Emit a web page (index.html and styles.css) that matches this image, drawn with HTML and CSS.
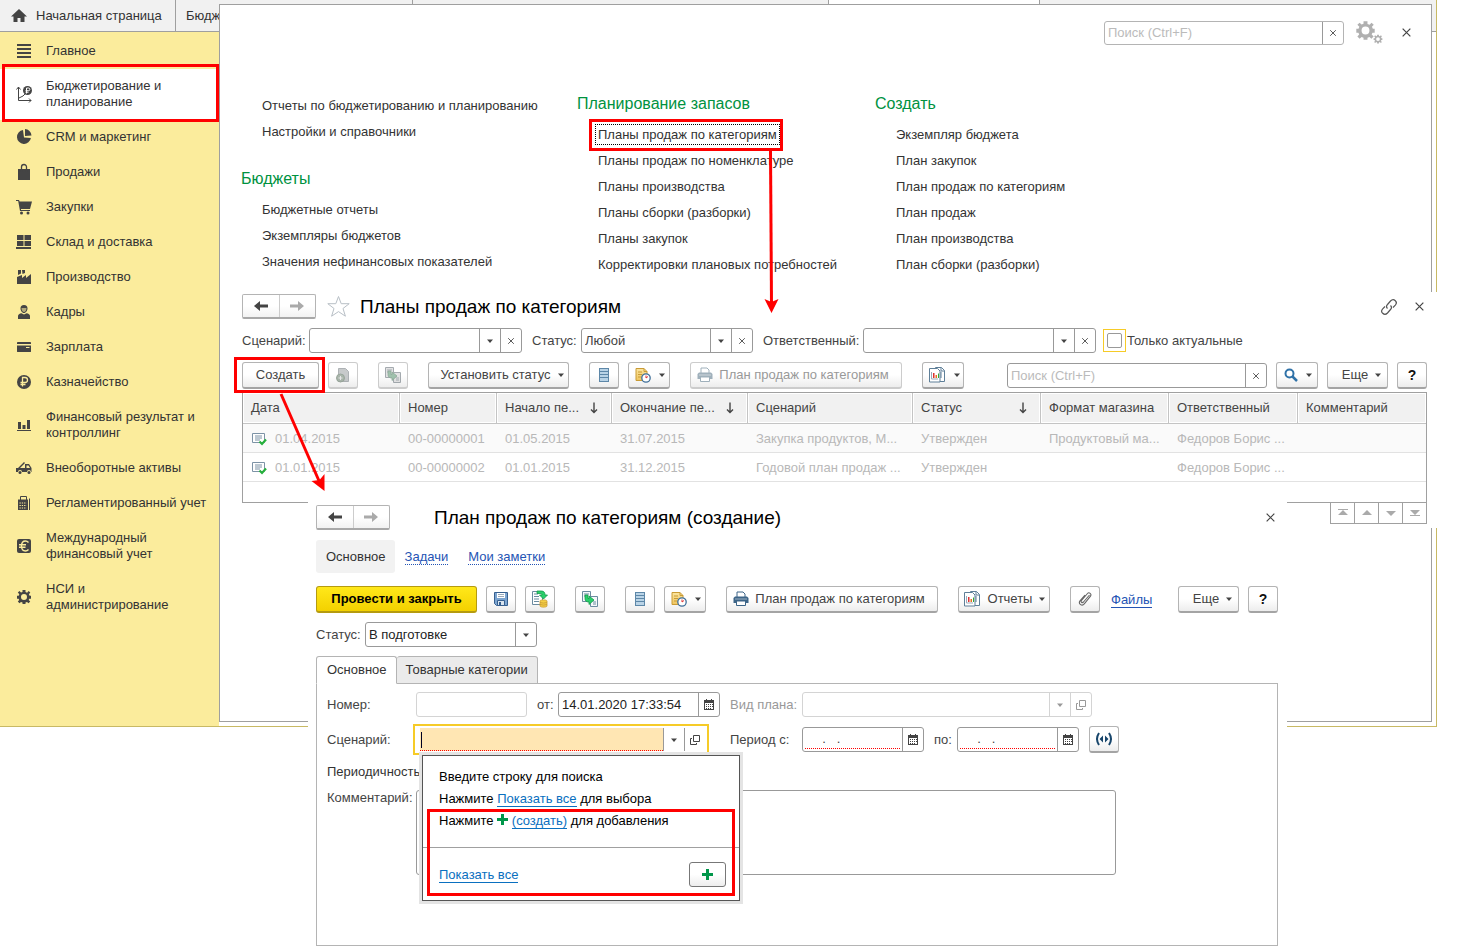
FILE: index.html
```html
<!DOCTYPE html>
<html lang="ru">
<head>
<meta charset="utf-8">
<title>Планы продаж по категориям</title>
<link rel="stylesheet" href="styles.css">
</head>
<body>
<svg class="defs" aria-hidden="true">
  <defs>
    <linearGradient id="gDoc" x1="0" y1="0" x2="0" y2="1"><stop offset="0" stop-color="#fbe5a0"/><stop offset="1" stop-color="#efc55f"/></linearGradient>
    <symbol id="left" viewBox="0 0 16 12"><path d="M1 6l6-5v3.500h8v3h-8V11z"/></symbol>
    <symbol id="right" viewBox="0 0 16 12"><path d="M15 6L9 1v3.500H1v3h8V11z"/></symbol>
    <symbol id="cross" viewBox="0 0 10 10"><path d="M1.500 1.500l7 7M8.500 1.500l-7 7" fill="none" stroke="#444" stroke-width="1.100"/></symbol>
    <symbol id="caret" viewBox="0 0 6 4"><path d="M0 0.500h6L3 4z"/></symbol>
    <symbol id="open" viewBox="0 0 10 10"><path d="M3.500 0.500h6v6h-6zM2 3.500H0.500v6h6V8" fill="none" stroke="currentColor"/></symbol>
    <symbol id="cal" viewBox="0 0 10 11"><path d="M0 1h2V0h1v1h4V0h1v1h2v10H0z"/><path d="M1 4h8v6H1z" fill="#fff"/><path d="M2 5h1v1H2zM4 5h1v1H4zM6 5h1v1H6zM8 5h1v1H8zM2 7h1v1H2zM4 7h1v1H4zM6 7h1v1H6zM8 7h1v1H8zM2 9h1v1H2zM4 9h1v1H4zM6 9h1v1H6z"/></symbol>
    <symbol id="list" viewBox="0 0 16 16"><path d="M3 1h10v14H3z" fill="#5d87a8"/><path d="M4 2h8v2H4zM4 5h8v2H4zM4 8h8v2H4zM4 11h8v3H4z" fill="#b9d3e6"/></symbol>
    <symbol id="clockdoc" viewBox="0 0 16 16"><path d="M1 1.500h8l3 3v9H1z" fill="url(#gDoc)" stroke="#c99b35"/><path d="M9 1.500v3h3M3 5h4M3 7.500h4M3 10h3" fill="none" stroke="#c99b35"/><circle cx="11" cy="11" r="4.200" fill="#fff" stroke="#3f6f99" stroke-width="1.300"/><path d="M11 8.500V11l2-1.500" fill="none" stroke="#d33"/></symbol>
    <symbol id="print" viewBox="0 0 16 16"><path d="M4 6V1h6l2 2v3" fill="#fff" stroke="currentColor"/><path d="M2 5.500h12l1.500 1.500v5H.500V7z"/><path d="M3.500 10h9v4.500h-9z" fill="#fff" stroke="currentColor"/><path d="M2 8h12" stroke="#fff" opacity=".5"/></symbol>
    <symbol id="report" viewBox="0 0 18 18"><path d="M7.500 1.500h6l3 3v11h-9z" fill="#fff" stroke="#5e7f98"/><path d="M13 1.500v3.500h3.500M13 6v6" fill="none" stroke="#5e7f98"/><path d="M1.500 2.500h8l2.500 2.500v11H1.500z" fill="#fff" stroke="#5e7f98"/><path d="M3.500 6v7h6.500" fill="none" stroke="#9ab"/><path d="M5 7h1.500v5H5z" fill="#d33"/><path d="M7.500 9H9v3H7.500z" fill="#e87020"/><path d="M10 7.500h1V12h-1z" fill="#3a3"/></symbol>
    <symbol id="copy" viewBox="0 0 18 18"><path d="M1.500 1.500h8v10h-8z" fill="#f4f8fa" stroke="#6b8ba0"/><path d="M3 4h5M3 6h3" stroke="#6b8ba0"/><path d="M9.500 6.500h7v10h-7z" fill="#f4f8fa" stroke="#6b8ba0"/><path d="M12 12h3M12 14h3" stroke="#6b8ba0"/><path d="M4 5v3.500c0 2.500 1.500 3.500 4 3.500v2.500l5-4.500-5-4v2.500H7V5z" fill="#29cf6b" stroke="#139a49" stroke-width=".8"/></symbol>
    <symbol id="rowdoc" viewBox="0 0 16 14"><path d="M1.500 1.500h12v9h-12z" fill="#fff" stroke="#7d93a6"/><path d="M4 4h7M4 6h7M4 8h5" stroke="#7d93a6"/><path d="M8.500 9.500l2.500 2.500 4-4.500" fill="none" stroke="#26b03c" stroke-width="2.200"/></symbol>
    <symbol id="plus" viewBox="0 0 11 11"><path d="M4 0h3v4h4v3H7v4H4V7H0V4h4z" fill="#00964a"/></symbol>
    <symbol id="gear" viewBox="0 0 16 16"><path fill-rule="evenodd" d="M6.500 1h3v2l1.600.7L12.600 2l1.700 1.600-1.400 1.600.7 1.500H15v3h-1.700l-.6 1.400 1.500 1.500-1.700 1.700-1.500-1.400-1.500.6V15h-3v-1.500L5 12.900l-1.500 1.400-1.700-1.700 1.400-1.500-.6-1.400H1v-3h1.700l.6-1.500L1.800 3.600 3.500 2 5 3.500l1.500-.6zM8 5a3 3 0 100 6 3 3 0 000-6z"/></symbol>
    <symbol id="sdown" viewBox="0 0 8 12"><path d="M4 0.500v10M1 7.500l3 3 3-3" fill="none" stroke="#444" stroke-width="1.400"/></symbol>
  </defs>
</svg>

<main class="desk">
  <div class="app">
    <nav class="apptabs">
      <button class="apptab home"><svg width="16" height="14" viewBox="0 0 16 14"><path d="M8 0l8 7.500h-2.500V13H9.500V9h-3v4H2.500V7.500H0z"/></svg>Начальная страница</button>
      <button class="apptab second">Бюджетирование</button>
      <button class="apptab third" aria-label="Вкладка"></button>
      <button class="apptab fourth" aria-label="Вкладка"></button>
    </nav>
    <nav class="side">
      <button class="item"><svg viewBox="0 0 16 16"><path d="M1 1h14v2H1zM1 5h14v2H1zM1 9h14v2H1zM1 13h14v2H1z"/></svg><span>Главное</span></button>
      <button class="item current"><svg viewBox="0 0 16 16"><path d="M2.500 1v13.500H15M.500 3.500l2-2.500 2 2.500M13 12.500l2 2-2 2M3 12l4-2 3-3" fill="none" stroke="#444"/><circle cx="11.500" cy="4.500" r="4.500"/><path d="M10.500 7.500v-5.500h2a1.300 1.300 0 010 2.700H9.500M9.500 6.200h3" fill="none" stroke="#fff"/></svg><span>Бюджетирование и планирование</span></button>
      <button class="item"><svg viewBox="0 0 16 16"><path d="M7 1a7 7 0 107.900 8L8 8.500z"/><path d="M9 0a7 7 0 016.500 6.500L9 7z"/></svg><span>CRM и маркетинг</span></button>
      <button class="item"><svg viewBox="0 0 16 16"><path d="M2 5h12v11H2z"/><path d="M5.500 8V3a2.500 2.500 0 015 0v5" fill="none" stroke="#444" stroke-width="1.300"/></svg><span>Продажи</span></button>
      <button class="item"><svg viewBox="0 0 16 16"><path d="M0 1h3l.6 1.500H16L14 10H5v1h9v1H4L2.200 2H0z"/><circle cx="5.500" cy="14" r="1.500"/><circle cx="12" cy="14" r="1.500"/></svg><span>Закупки</span></button>
      <button class="item"><svg viewBox="0 0 16 16"><path d="M1 1h6.500v5H1zM8.500 1H15v5H8.500zM1 7h6.500v5H1zM8.500 7H15v5H8.500zM0 13h15v2H0z"/></svg><span>Склад и доставка</span></button>
      <button class="item"><svg viewBox="0 0 16 16"><path d="M1 15V8l5-2v3l4-3v3l5-4v10zM2 1h3v3.500L2 6zM6 1h3v3L6.500 5z"/></svg><span>Производство</span></button>
      <button class="item"><svg viewBox="0 0 16 16"><path d="M4.500 4.500C4.500 2.500 5.500 1 8 1s3.500 1.500 3.500 3.500S10 9 8 9 4.500 6.500 4.500 4.500zM2 15v-3c0-1.500 1.500-2.500 3.500-2.800L8 10.500l2.500-1.300c2 .3 3.500 1.300 3.500 2.800v3z"/><path d="M5.500 4h5c0 2-1 4-2.500 4S5.500 6 5.500 4z" fill="#fbec9c" opacity=".6"/></svg><span>Кадры</span></button>
      <button class="item"><svg viewBox="0 0 16 16"><path d="M1 3.500Q1 3 2 3h12q1 0 1 .5V5H1zM1 6.500h14v6q0 .5-1 .5H2q-1 0-1-.5z"/><path d="M10 8h3.500v1H10z" fill="#fbec9c"/></svg><span>Зарплата</span></button>
      <button class="item"><svg viewBox="0 0 16 16"><circle cx="8" cy="8" r="7"/><path d="M6.500 12.500v-9H9a2.500 2.500 0 010 5H4.500M4.500 10.500h5" fill="none" stroke="#fbec9c" stroke-width="1.300"/></svg><span>Казначейство</span></button>
      <button class="item"><svg viewBox="0 0 16 16"><path d="M1 13h14v1H1zM2 5h3v7H2zM6.500 8h3v4h-3zM11 3h3v9h-3z"/></svg><span>Финансовый результат и контроллинг</span></button>
      <button class="item"><svg viewBox="0 0 16 16"><path d="M0 8h2l6-6 1 1-5 5h5V4h4l2.500 4v4H15a2 2 0 00-4 0H6a2 2 0 00-4 0H0zM10.500 5.500V8H14l-1.500-2.500z" fill-rule="evenodd"/><circle cx="4" cy="12.500" r="1.500"/><circle cx="13" cy="12.500" r="1.500"/></svg><span>Внеоборотные активы</span></button>
      <button class="item"><svg viewBox="0 0 16 16"><path d="M4.500 5V1.500h6V5" fill="none" stroke="#444"/><path d="M2 4.500h10V15H2zM13 3.500h1V15h-1z"/><path d="M3.500 8h7M3.500 10.500h7M3.500 13h7" stroke="#fbec9c" stroke-width="1.200" stroke-dasharray="1.300 1"/></svg><span>Регламентированный учет</span></button>
      <button class="item"><svg viewBox="0 0 16 16"><rect x="1" y="1" width="14" height="14" rx="2"/><path d="M12.500 4.500C11.500 3.400 10.500 3 9.500 3 7 3 5.500 5 5.500 8S7 13 9.500 13c1 0 2-.4 3-1.500M3 6.800h7M3 9.200h6.500" fill="none" stroke="#fbec9c" stroke-width="1.400"/></svg><span>Международный финансовый учет</span></button>
      <button class="item"><svg viewBox="0 0 16 16"><use href="#gear"/></svg><span>НСИ и администрирование</span></button>
    </nav>
    <div class="mark mark-side"></div>
  </div>

  <section class="menu">
    <header class="menuhead">
      <div class="field soft menusearch"><input type="text" placeholder="Поиск (Ctrl+F)" aria-label="Поиск"><button aria-label="Очистить"><svg width="8" height="8"><use href="#cross"/></svg></button></div>
      <button class="bare gears" aria-label="Настройки"><svg width="27" height="24" viewBox="0 0 27 24"><use href="#gear" x="-1" y="-1" width="21" height="21"/><use href="#gear" x="17" y="13" width="10" height="10"/></svg></button>
      <button class="bare" aria-label="Закрыть"><svg width="11" height="11"><use href="#cross"/></svg></button>
    </header>
    <div class="menucols">
      <div class="col first">
        <ul><li><a href="#">Отчеты по бюджетированию и планированию</a></li><li><a href="#">Настройки и справочники</a></li></ul>
        <h2>Бюджеты</h2>
        <ul><li><a href="#">Бюджетные отчеты</a></li><li><a href="#">Экземпляры бюджетов</a></li><li><a href="#">Значения нефинансовых показателей</a></li></ul>
      </div>
      <div class="col">
        <h2>Планирование запасов</h2>
        <ul><li><a href="#" class="focused">Планы продаж по категориям</a></li><li><a href="#">Планы продаж по номенклатуре</a></li><li><a href="#">Планы производства</a></li><li><a href="#">Планы сборки (разборки)</a></li><li><a href="#">Планы закупок</a></li><li><a href="#">Корректировки плановых потребностей</a></li></ul>
      </div>
      <div class="col">
        <h2>Создать</h2>
        <ul><li><a href="#">Экземпляр бюджета</a></li><li><a href="#">План закупок</a></li><li><a href="#">План продаж по категориям</a></li><li><a href="#">План продаж</a></li><li><a href="#">План производства</a></li><li><a href="#">План сборки (разборки)</a></li></ul>
      </div>
    </div>
  </section>

  <section class="listwin">
    <header class="winhead">
      <div class="navpair"><button aria-label="Назад"><svg width="16" height="12"><use href="#left"/></svg></button><button class="off" aria-label="Вперед"><svg width="16" height="12"><use href="#right"/></svg></button></div>
      <button class="bare star" aria-label="Избранное"><svg width="25" height="23" viewBox="0 0 25 23"><path d="M12.500 1.500l2.700 7.200h8L17 13.500l2.400 7.700-6.900-4.600-6.900 4.600L8 13.500 1.800 8.700h8z" fill="#fff" stroke="#b8bfc6"/></svg></button>
      <h1>Планы продаж по категориям</h1>
      <button class="bare push" aria-label="Ссылка"><svg width="18" height="18" viewBox="0 0 18 18"><path d="M7.500 10.500c-1.500-1.500-1-3 0-4l3-3.500c1.500-1.500 3.500-1.500 4.800-.3s1.200 3.200 0 4.500L13 9.500M10.500 7.500c1.500 1.500 1 3 0 4l-3 3.500c-1.500 1.500-3.500 1.500-4.800.3s-1.200-3.200 0-4.500L5 8.500" fill="none" stroke="#555" stroke-width="1.200"/></svg></button>
      <button class="bare close" aria-label="Закрыть"><svg width="11" height="11"><use href="#cross"/></svg></button>
    </header>
    <div class="filters">
      <label for="f1" class="l1">Сценарий:</label>
      <div class="field w1"><input id="f1" type="text"><button aria-label="Выбрать"><svg width="6" height="4"><use href="#caret"/></svg></button><button aria-label="Очистить"><svg width="8" height="8"><use href="#cross"/></svg></button></div>
      <label for="f2" class="l2">Статус:</label>
      <div class="field w2"><input id="f2" type="text" value="Любой"><button aria-label="Выбрать"><svg width="6" height="4"><use href="#caret"/></svg></button><button aria-label="Очистить"><svg width="8" height="8"><use href="#cross"/></svg></button></div>
      <label for="f3" class="l3">Ответственный:</label>
      <div class="field w3"><input id="f3" type="text"><button aria-label="Выбрать"><svg width="6" height="4"><use href="#caret"/></svg></button><button aria-label="Очистить"><svg width="8" height="8"><use href="#cross"/></svg></button></div>
      <span class="checkframe"><input type="checkbox" id="act"></span><label for="act">Только актуальные</label>
    </div>
    <div class="bar">
      <button class="btn create">Создать</button>
      <button class="btn icon dim" aria-label="Скопировать"><svg width="16" height="16" viewBox="0 0 16 16"><path d="M3.500 1.500h7l3 3v10h-10z" fill="#b9c6cf" stroke="#8499a8"/><circle cx="5.500" cy="11" r="4" fill="#6fa876" stroke="#4b8a55"/><path d="M5.500 9v4M3.500 11h4" stroke="#fff"/></svg></button>
      <button class="btn icon dim group" aria-label="На основании"><svg width="18" height="18"><use href="#copy"/></svg></button>
      <button class="btn group status">Установить статус<svg width="6" height="4"><use href="#caret"/></svg></button>
      <button class="btn icon group" aria-label="Реестр"><svg width="16" height="16"><use href="#list"/></svg></button>
      <button class="btn drop" aria-label="Напоминания"><svg width="16" height="16"><use href="#clockdoc"/></svg><svg width="6" height="4"><use href="#caret"/></svg></button>
      <button class="btn group print off"><svg width="16" height="16"><use href="#print"/></svg>План продаж по категориям</button>
      <button class="btn drop group" aria-label="Отчеты"><svg width="18" height="18"><use href="#report"/></svg><svg width="6" height="4"><use href="#caret"/></svg></button>
      <div class="field barsearch"><input type="text" placeholder="Поиск (Ctrl+F)" aria-label="Поиск"><button aria-label="Очистить"><svg width="8" height="8"><use href="#cross"/></svg></button></div>
      <button class="btn drop" aria-label="Найти"><svg width="14" height="14" viewBox="0 0 14 14"><circle cx="5.500" cy="5.500" r="4" fill="none" stroke="#2f72a8" stroke-width="2"/><path d="M8.500 8.500l4.500 4.500" stroke="#2f72a8" stroke-width="2.500"/></svg><svg width="6" height="4"><use href="#caret"/></svg></button>
      <button class="btn more">Еще<svg width="6" height="4"><use href="#caret"/></svg></button>
      <button class="btn icon help">?</button>
    </div>
    <table class="grid">
      <colgroup><col class="c1"><col class="c2"><col class="c3"><col class="c4"><col class="c5"><col class="c6"><col class="c7"><col class="c8"><col></colgroup>
      <thead><tr><th>Дата</th><th>Номер</th><th><span class="sort">Начало пе...<svg width="8" height="12"><use href="#sdown"/></svg></span></th><th><span class="sort">Окончание пе...<svg width="8" height="12"><use href="#sdown"/></svg></span></th><th>Сценарий</th><th><span class="sort">Статус<svg width="8" height="12"><use href="#sdown"/></svg></span></th><th>Формат магазина</th><th>Ответственный</th><th>Комментарий</th></tr></thead>
      <tbody>
        <tr><td><span class="date"><svg width="16" height="14"><use href="#rowdoc"/></svg>01.04.2015</span></td><td>00-00000001</td><td>01.05.2015</td><td>31.07.2015</td><td>Закупка продуктов, М...</td><td>Утвержден</td><td>Продуктовый ма...</td><td>Федоров Борис ...</td><td></td></tr>
        <tr><td><span class="date"><svg width="16" height="14"><use href="#rowdoc"/></svg>01.01.2015</span></td><td>00-00000002</td><td>01.01.2015</td><td>31.12.2015</td><td>Годовой план продаж ...</td><td>Утвержден</td><td></td><td>Федоров Борис ...</td><td></td></tr>
        <tr class="blank"><td colspan="9"></td></tr>
      </tbody>
    </table>
    <div class="pager">
      <button aria-label="В начало"><svg width="10" height="8" viewBox="0 0 10 8"><path d="M0 0h10v1H0zM5 1l5 5H0z"/></svg></button>
      <button aria-label="Вверх"><svg width="10" height="8" viewBox="0 0 10 8"><path d="M5 1l5 5H0z"/></svg></button>
      <button aria-label="Вниз"><svg width="10" height="8" viewBox="0 0 10 8"><path d="M0 2h10L5 7z"/></svg></button>
      <button aria-label="В конец"><svg width="10" height="8" viewBox="0 0 10 8"><path d="M0 1h10L5 6zM0 6h10v1H0z"/></svg></button>
    </div>
    <div class="mark mark-create"></div>
  </section>

  <section class="formwin">
    <header class="winhead">
      <div class="navpair"><button aria-label="Назад"><svg width="16" height="12"><use href="#left"/></svg></button><button class="off" aria-label="Вперед"><svg width="16" height="12"><use href="#right"/></svg></button></div>
      <h1>План продаж по категориям (создание)</h1>
      <button class="bare push close" aria-label="Закрыть"><svg width="11" height="11"><use href="#cross"/></svg></button>
    </header>
    <nav class="links"><span class="here">Основное</span><a href="#">Задачи</a><a href="#">Мои заметки</a></nav>
    <div class="bar">
      <button class="btn primary">Провести и закрыть</button>
      <button class="btn icon" aria-label="Записать"><svg width="16" height="16" viewBox="0 0 16 16"><path d="M1.500 1.500h13v13h-11l-2-2z" fill="#7ba4d0" stroke="#365f8f"/><path d="M4 2h8v5H4z" fill="#fff"/><path d="M5 3.500h6M5 5.500h6" stroke="#9ab"/><path d="M4.500 9.500h7v5h-7z" fill="#d9e4ee" stroke="#365f8f"/><path d="M6 11h2v3H6z" fill="#365f8f"/></svg></button>
      <button class="btn icon" aria-label="Провести"><svg width="18" height="18" viewBox="0 0 18 18"><path d="M1.500 1.500h10v13h-10z" fill="#fff" stroke="#6b8ba0"/><path d="M3 4h4M3 6.500h5M3 9h5M3 11.500h5" stroke="#6b8ba0"/><path d="M6 1h4c3 0 4 1.500 4 4h2.500L12.500 9 8.500 5H11c0-1-.5-1.500-2-1.500H6z" fill="#29cf6b" stroke="#139a49" stroke-width=".8"/><path d="M9 11c0-1.500 7-1.500 7 0v5c0 1.500-7 1.500-7 0z" fill="#f4cf45" stroke="#c99b35" stroke-width=".8"/><path d="M9 12.500q3.500 1.200 7 0M9 14.500q3.500 1.200 7 0" fill="none" stroke="#c99b35" stroke-width=".8"/></svg></button>
      <button class="btn icon group" aria-label="На основании"><svg width="18" height="18"><use href="#copy"/></svg></button>
      <button class="btn icon group" aria-label="Реестр"><svg width="16" height="16"><use href="#list"/></svg></button>
      <button class="btn drop" aria-label="Напоминания"><svg width="16" height="16"><use href="#clockdoc"/></svg><svg width="6" height="4"><use href="#caret"/></svg></button>
      <button class="btn group print"><svg class="blue" width="16" height="16"><use href="#print"/></svg>План продаж по категориям</button>
      <button class="btn group reports"><svg width="18" height="18"><use href="#report"/></svg>Отчеты<svg width="6" height="4"><use href="#caret"/></svg></button>
      <button class="btn icon group" aria-label="Присоединить"><svg width="14" height="16" viewBox="0 0 14 16"><path d="M11.500 4L5.500 11c-1.500 1.500-3-.2-2-1.500L9.500 2.500c1.500-1.700 4.500.3 3 2.700l-6 7.500c-2.500 3-6.500.3-4.500-2.800L7 4" fill="none" stroke="#666" stroke-width="1.100"/></svg></button>
      <a class="files" href="#">Файлы</a>
      <button class="btn more push">Еще<svg width="6" height="4"><use href="#caret"/></svg></button>
      <button class="btn icon help">?</button>
    </div>
    <div class="statusrow"><label for="st">Статус:</label><div class="field"><input id="st" type="text" value="В подготовке"><button aria-label="Выбрать"><svg width="6" height="4"><use href="#caret"/></svg></button></div></div>
    <div class="tabs"><button class="tab on">Основное</button><button class="tab">Товарные категории</button></div>
    <div class="pane">
      <div class="row">
        <label for="num" class="lab">Номер:</label>
        <div class="field faint num"><input id="num" type="text"></div>
        <label for="dt" class="from">от:</label>
        <div class="field datetime"><input id="dt" type="text" value="14.01.2020 17:33:54"><button aria-label="Календарь"><svg width="10" height="11"><use href="#cal"/></svg></button></div>
        <label for="kind" class="kindlab pale">Вид плана:</label>
        <div class="field faint kind"><input id="kind" type="text"><button aria-label="Выбрать"><svg width="6" height="4"><use href="#caret"/></svg></button><button aria-label="Открыть"><svg width="10" height="10"><use href="#open"/></svg></button></div>
      </div>
      <div class="row">
        <label for="sc" class="lab">Сценарий:</label>
        <div class="combo">
          <div class="field active"><input id="sc" type="text"><button aria-label="Выбрать"><svg width="6" height="4"><use href="#caret"/></svg></button><button aria-label="Открыть"><svg width="10" height="10"><use href="#open"/></svg></button></div>
          <div class="popup">
            <div class="hints">
              <p>Введите строку для поиска</p>
              <p>Нажмите <a href="#">Показать все</a> для выбора</p>
              <p>Нажмите <svg width="11" height="11"><use href="#plus"/></svg> <a href="#">(создать)</a> для добавления</p>
            </div>
            <div class="popfoot"><a href="#">Показать все</a><button class="btn" aria-label="Создать"><svg width="11" height="11"><use href="#plus"/></svg></button></div>
            <div class="mark mark-popup"></div>
          </div>
        </div>
        <label for="p1" class="kindlab">Период с:</label>
        <div class="field need"><input id="p1" type="text" value="  .   ."><button aria-label="Календарь"><svg width="10" height="11"><use href="#cal"/></svg></button></div>
        <label for="p2" class="to">по:</label>
        <div class="field need"><input id="p2" type="text" value="  .   ."><button aria-label="Календарь"><svg width="10" height="11"><use href="#cal"/></svg></button></div>
        <button class="btn icon period" aria-label="Выбрать период"><svg width="18" height="14" viewBox="0 0 18 14"><path d="M4 1Q0 7 4 13M14 1q4 6 0 12" fill="none" stroke="#17456b" stroke-width="2"/><path d="M8 3.500v7L4.500 7zM10 3.500v7L13.500 7z" fill="#17456b"/></svg></button>
      </div>
      <div class="plain">Периодичность</div>
      <div class="row note"><label for="cm" class="lab">Комментарий:</label><textarea id="cm"></textarea></div>
    </div>
  </section>

  <div class="mark mark-link"></div>
  <svg class="arrows" width="600" height="360" viewBox="0 0 600 360" aria-hidden="true">
    <path d="M530.500 20l1 152" stroke="#f00" stroke-width="3"/><path d="M531.500 182l-7-14 7 3 7-3z" fill="#f00"/>
    <path d="M41 263l38.500 88" stroke="#f00" stroke-width="3"/><path d="M84.500 360l-13-10 8-1 5-6z" fill="#f00"/>
  </svg>
</main>
</body>
</html>
```
FILE: styles.css
```css
* { box-sizing: border-box; }
body { margin: 0; background: #fff; color: #333; font: 13px/16px "Liberation Sans", Arial, sans-serif; }
button, input, textarea { font: inherit; color: inherit; margin: 0; padding: 0; }
button { display: flex; align-items: center; justify-content: center; border: 0; background: none; white-space: nowrap; }
h1, h2, ul, p { margin: 0; padding: 0; font-weight: normal; }
ul { list-style: none; }
svg { flex: none; fill: currentColor; }
.defs { position: absolute; width: 0; height: 0; }
.desk { position: relative; min-height: 100vh; overflow: hidden; }

.app { position: relative; display: flex; flex-direction: column; margin-right: 29px; min-height: 727px; border-right: 1px solid #c8b964; border-bottom: 1px solid #c8b964; }
.apptabs { display: flex; height: 32px; background: #f1f1f1; border-bottom: 1px solid #9f9f9f; }
.apptab { justify-content: flex-start; border-right: 1px solid #9f9f9f; }
.home { width: 176px; gap: 9px; padding-left: 11px; }
.home svg { fill: #444; }
.second { width: 237px; padding-left: 10px; }
.third { width: 416px; }
.fourth { width: 211px; background: #fff; }
.side { flex: 1; width: 219px; padding-top: 2px; background: #fbec9c; }
.item { width: 100%; justify-content: flex-start; gap: 14px; padding: 9px 8px 10px 16px; text-align: left; white-space: normal; }
.item svg { width: 16px; height: 16px; overflow: visible; fill: #444; }
.current { background: #fff; }

.mark { position: absolute; border: 3px solid #f00; pointer-events: none; }
.mark-side { left: 2px; top: 64px; width: 217px; height: 58px; }
.mark-link { left: 589px; top: 119px; width: 194px; height: 32px; }
.mark-create { left: 12px; top: 65px; width: 91px; height: 36px; }
.mark-popup { left: 4px; right: 4px; top: 53px; bottom: 4px; }
.arrows { position: absolute; left: 240px; top: 131px; overflow: visible; pointer-events: none; }

.menu { position: absolute; left: 219px; right: 34px; top: 4px; height: 718px; background: #fff; border: 1px solid #9f9f9f; }
.menuhead { display: flex; align-items: center; justify-content: flex-end; height: 55px; padding-right: 19px; }
.menusearch { width: 240px; margin-right: 12px; }
.menuhead .gears { margin-right: 18px; color: #b0b0b0; }
.menucols { display: grid; grid-template-columns: 336px 298px 1fr; padding: 34px 0 0 21px; }
.col h2 { font-size: 16px; line-height: 20px; color: #00923f; padding-bottom: 8px; }
.col ul { padding-left: 21px; }
.col li { line-height: 26px; }
.col.first { margin-top: -1px; }
.first ul + h2 { padding-top: 24px; padding-bottom: 8px; }
.col a { color: #333; text-decoration: none; }
.col .focused { outline: 1px dotted #000; outline-offset: 2px; }

.bare { color: #444; }
.push { margin-left: auto; }
.winhead { display: flex; align-items: center; height: 25px; }
.winhead h1 { font-size: 19px; line-height: 24px; color: #000; }
.navpair { display: flex; width: 74px; height: 25px; border: 1px solid #b4b4b4; border-bottom: 2px solid #a8a8a8; border-radius: 2px; background: linear-gradient(#fff 50%, #f2f2f2); }
.navpair button { flex: 1; color: #444; }
.navpair .off { color: #aaa; border-left: 1px solid #ccc; }

.field { display: flex; height: 25px; border: 1px solid #999; border-radius: 3px; background: #fff; }
.field input { flex: 1; min-width: 0; width: 0; border: 0; padding: 0 3px; background: none; outline: 0; }
.field button { width: 21px; border-left: 1px solid #999; color: #444; }
.field input::placeholder { color: #bbb; }
.soft { border-color: #b4b4b4; height: 24px; }
.faint, .faint button { border-color: #d4d4d4; color: #999; }

.btn { height: 27px; border: 1px solid #b4b4b4; border-bottom: 2px solid #a4a4a4; border-radius: 3px; background: linear-gradient(#fff 50%, #ededed); color: #444; }
.icon { width: 30px; }
.dim { border-color: #ccc; }
.dim svg { opacity: .6; filter: saturate(.4) brightness(.85); }
.off.btn { color: #999; border-color: #ccc; }
.off.btn svg { color: #9fb0bb; }
.drop { width: 42px; gap: 8px; padding-left: 2px; }
.help { font-size: 14px; font-weight: bold; color: #111; }
.more { width: 61px; gap: 7px; padding-left: 8px; }
.print { width: 212px; gap: 6px; padding-right: 6px; }
.print .blue { color: #3d6588; }
.status { width: 141px; gap: 7px; padding-left: 7px; }
.create { width: 77px; }
.reports { width: 92px; gap: 7px; }
.bar { display: flex; align-items: center; gap: 9px; }
.bar .group { margin-left: 11px; }
.barsearch { flex: 1; max-width: 260px; margin-left: auto; }

.listwin { position: absolute; left: 222px; right: 0; top: 292px; height: 236px; padding: 2px 39px 0 20px; background: #fff; }
.star { margin: 0 9px 0 10px; }
.listwin .close { margin: 0 2px 0 16px; }
.filters { display: flex; align-items: center; padding-top: 9px; white-space: nowrap; color: #444; }
.l1 { width: 67px; }
.l2 { width: 59px; padding-left: 10px; }
.l3 { width: 110px; padding-left: 10px; }
.w1 { width: 213px; }
.w2 { width: 172px; }
.w3 { width: 233px; }
.checkframe { display: flex; align-items: center; justify-content: center; width: 23px; height: 23px; margin: 0 1px 0 7px; border: 1px solid #f6cb28; }
.checkframe input { appearance: none; width: 15px; height: 15px; border: 1px solid #999; border-radius: 2px; }
.listwin .bar { padding: 9px 0 3px; }
.grid { width: 100%; table-layout: fixed; border-collapse: separate; border-spacing: 0; border: 1px solid #a0a0a0; }
.c1 { width: 157px; } .c2 { width: 97px; } .c3 { width: 115px; } .c4 { width: 136px; } .c5 { width: 165px; } .c6, .c7 { width: 128px; } .c8 { width: 129px; }
.grid th { height: 31px; padding: 0 8px; text-align: left; font-weight: normal; color: #444; background: #f1f1f1; border-right: 1px solid #c4c4c4; border-bottom: 1px solid #c4c4c4; box-shadow: inset 0 0 0 1px #fff; white-space: nowrap; }
.grid th:last-child { border-right: 0; }
.grid td { height: 29px; padding: 1px 8px 0; color: #b8b8b8; border-bottom: 1px solid #e2e2e2; white-space: nowrap; }
.grid tr:first-child td { background: #fafafa; }
.grid .blank td { height: 20px; border: 0; }
.sort { display: flex; align-items: center; justify-content: space-between; padding-right: 5px; }
.date { display: flex; align-items: center; gap: 8px; }
.pager { display: flex; justify-content: flex-end; margin-top: -1px; }
.pager button { width: 24px; height: 22px; border: 1px solid #a0a0a0; border-right: 0; color: #aaa; }
.pager button:last-child { width: 25px; border-right: 1px solid #a0a0a0; }

.formwin { position: absolute; left: 308px; right: 179px; top: 500px; min-height: 448px; padding: 5px 9px 0 8px; background: #fff; }
.formwin h1 { padding-left: 44px; }
.formwin .close { margin-right: 2px; }
.links { display: flex; align-items: center; padding: 10px 0 13px; }
.here { padding: 9px 9px 8px 10px; margin-right: 10px; border-radius: 3px; background: #f2f2f2; }
.links a { margin-right: 20px; color: #2454b4; text-decoration: none; border-bottom: 1px dotted #2454b4; line-height: 15px; }
.primary { width: 161px; font-weight: bold; color: #000; background: linear-gradient(#ffe81a, #f3d100); border-color: #b59b10; }
.files { margin-left: 2px; color: #2454b4; text-decoration: none; border-bottom: 1px solid #2454b4; line-height: 15px; }
.statusrow { display: flex; align-items: center; padding: 9px 0; }
.statusrow label { width: 49px; color: #444; }
.statusrow .field { width: 172px; color: #222; }
.tabs { position: relative; display: flex; }
.tab { height: 28px; padding: 0 9px; border: 1px solid #b4b4b4; border-left: 0; border-radius: 3px 3px 0 0; background: #ebebeb; }
.tab.on { padding-left: 10px; border-left: 1px solid #b4b4b4; border-bottom-color: #fff; background: #fff; }
.pane { margin-top: -1px; height: 263px; padding: 8px 10px 0; border: 1px solid #b4b4b4; }
.row { display: flex; align-items: center; margin-bottom: 9px; white-space: nowrap; color: #444; }
.lab { width: 89px; }
.num { width: 111px; }
.from { width: 31px; padding-left: 10px; }
.datetime { width: 162px; color: #222; }
.kindlab { width: 82px; padding-left: 10px; }
.pale { color: #999; }
.kind { width: 290px; }
.combo { position: relative; width: 304px; }
.active { width: 290px; border-color: transparent; outline: 2px solid #f6cb28; outline-offset: 1px; border-radius: 0; }
.field.active input { margin-left: 3px; background: linear-gradient(#002, #002) 1px 4px / 1px 16px no-repeat, repeating-linear-gradient(90deg, #f00 0 1px, transparent 1px 2px) bottom / 100% 1px no-repeat, #ffe6b3; }
.need { width: 122px; }
.field.need input { margin: 0 2px 2px; padding-left: 10px; background: repeating-linear-gradient(90deg, #f00 0 1px, transparent 1px 2px) bottom / 100% 1px no-repeat; white-space: pre; }
.to { width: 33px; padding-left: 10px; }
.period { margin-left: 10px; }
.plain { margin-top: 11px; line-height: 16px; }
.note { align-items: flex-start; margin-top: 10px; }
textarea { width: 700px; height: 85px; border: 1px solid #999; border-radius: 3px; resize: none; }
.popup { position: absolute; z-index: 2; left: 6px; top: 28px; width: 318px; background: #fff; border: 1px solid #555; box-shadow: 0 0 0 3px #e4e4e4; color: #000; }
.hints { padding: 10px 16px 15px; border-bottom: 1px solid #a0a0a0; line-height: 22px; }
.popup a { color: #0a70c0; text-decoration: none; border-bottom: 1px solid #0a70c0; }
.popfoot { display: flex; align-items: center; justify-content: space-between; padding: 14px 13px 13px 16px; line-height: 15px; }
.popfoot .btn { width: 37px; height: 25px; border-color: #777; border-bottom-width: 1px; }
```
